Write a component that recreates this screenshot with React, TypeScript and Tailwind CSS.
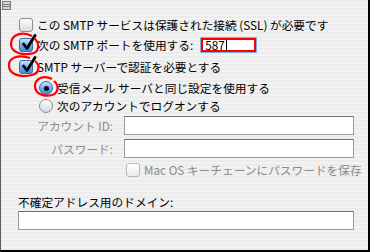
import React from "react";

const FONT = { fontFamily: '"Noto Sans CJK JP", "Noto Sans", sans-serif' };

function CheckBox({ checked = false, disabled = false }: { checked?: boolean; disabled?: boolean }) {
  const box = checked
    ? "border-[#3d6ba3] bg-gradient-to-b from-[#c9e4fb] via-[#6fb1ee] to-[#3b8de3]"
    : disabled
      ? "border-[#b9b9b9] bg-gradient-to-b from-white to-[#ececec]"
      : "border-[#8d8d8d] bg-gradient-to-b from-white to-[#d9d9d9]";
  return (
    <div className={`relative w-[14px] h-[14px] shrink-0 rounded-[3px] border ${box}`}>
      {checked && (
        <svg className="absolute left-[1px] top-[-5px]" width="16" height="17" viewBox="0 0 16 17">
          <path d="M2.5 10 L6 14.5 L14 1.5" fill="none" stroke="#000" strokeWidth="2.8" strokeLinecap="round" strokeLinejoin="round" />
        </svg>
      )}
    </div>
  );
}

function Radio({ selected = false }: { selected?: boolean }) {
  const ring = selected
    ? "border-[#3d6ba3] bg-gradient-to-b from-[#c9e4fb] via-[#6fb1ee] to-[#3b8de3]"
    : "border-[#8d8d8d] bg-gradient-to-b from-white to-[#d9d9d9]";
  return (
    <div className={`flex items-center justify-center w-[14px] h-[14px] shrink-0 rounded-full border ${ring}`}>
      {selected && <div className="w-[5px] h-[5px] rounded-full bg-black" />}
    </div>
  );
}

function TextField({ className = "" }: { className?: string }) {
  return <div className={`h-[19px] bg-white border border-[#9a9a9a] border-t-[#6e6e6e] ${className}`} />;
}

export default function App() {
  return (
    <div
      className="relative w-[370px] h-[252px] overflow-hidden border-l border-[#5a5a5a] border-r-2 border-b-2 border-r-black border-b-black text-[11.7px] leading-none text-black whitespace-nowrap bg-[repeating-linear-gradient(0deg,#ececec_0px,#ececec_2px,#f2f2f2_2px,#f2f2f2_4px)]"
      style={FONT}
    >
      {/* window grip in the corner */}
      <svg className="absolute left-[1px] top-[1px]" width="9" height="9" viewBox="0 0 9 9">
        <rect x="0.5" y="0.5" width="8" height="8" fill="#d6d6d6" stroke="#7a7a7a" />
        <path d="M1 3.5 H8 M1 5.5 H8" stroke="#7a7a7a" />
      </svg>

      <div className="flex flex-col pt-[16px] pl-[18px]">
        <div className="flex items-center h-[18px] gap-[4px]">
          <CheckBox />
          <span>この SMTP サービスは保護された接続 (SSL) が必要です</span>
        </div>

        <div className="flex items-center h-[22px] gap-[4px]">
          <CheckBox checked />
          <span>次の SMTP ポートを使用する:</span>
          <div className="ml-[3px] w-[57px] h-[16px] rounded-[1px] bg-[#86acdc] p-[1px]">
            <div className="flex items-center h-full bg-white border-2 border-[#ff0000] pl-[2px]">
              <span>587</span>
              <span className="w-px h-[11px] bg-black ml-[1px]" />
            </div>
          </div>
        </div>

        <div className="flex items-center h-[22px] gap-[4px]">
          <CheckBox checked />
          <span>SMTP サーバーで認証を必要とする</span>
        </div>

        <div className="flex items-center h-[18px] gap-[4px] pl-[20px] mt-[1px]">
          <Radio selected />
          <span>受信メール サーバと同じ設定を使用する</span>
        </div>

        <div className="flex items-center h-[18px] gap-[4px] pl-[20px]">
          <Radio />
          <span>次のアカウントでログオンする</span>
        </div>

        <div className="flex items-center gap-[11px] mt-[1px] text-[#8a8a8a]">
          <span className="w-[94px] text-right">アカウント ID:</span>
          <TextField className="w-[230px]" />
        </div>

        <div className="flex items-center gap-[11px] mt-[4px] text-[#8a8a8a]">
          <span className="w-[94px] text-right">パスワード:</span>
          <TextField className="w-[230px]" />
        </div>

        <div className="flex items-center h-[19px] gap-[4px] pl-[107px] mt-[2px] text-[#8a8a8a]">
          <CheckBox disabled />
          <span>Mac OS キーチェーンにパスワードを保存</span>
        </div>

        <div className="mt-[17px] -ml-[1px]">不確定アドレス用のドメイン:</div>
        <TextField className="mt-[3px] -ml-[1px] w-[336px]" />
      </div>

      {/* red hand-drawn annotations */}
      <svg className="absolute left-0 top-0 pointer-events-none" width="370" height="252" viewBox="0 0 370 252">
        <path d="M31 36 C22 31 10 34 10 44 C10 53 22 56 33 53 C39 50 38 42 33 38" fill="none" stroke="#ff0000" strokeWidth="2.2" />
        <path d="M29 58 C17 54 7 58 8 66 C8 74 19 78 31 75 C39 73 39 65 34 61" fill="none" stroke="#ff0000" strokeWidth="2.2" />
        <path d="M51 79 C43 75 34 78 34 86 C34 94 43 97 51 95 C58 93 58 85 53 81" fill="none" stroke="#ff0000" strokeWidth="2.2" />
      </svg>
    </div>
  );
}
